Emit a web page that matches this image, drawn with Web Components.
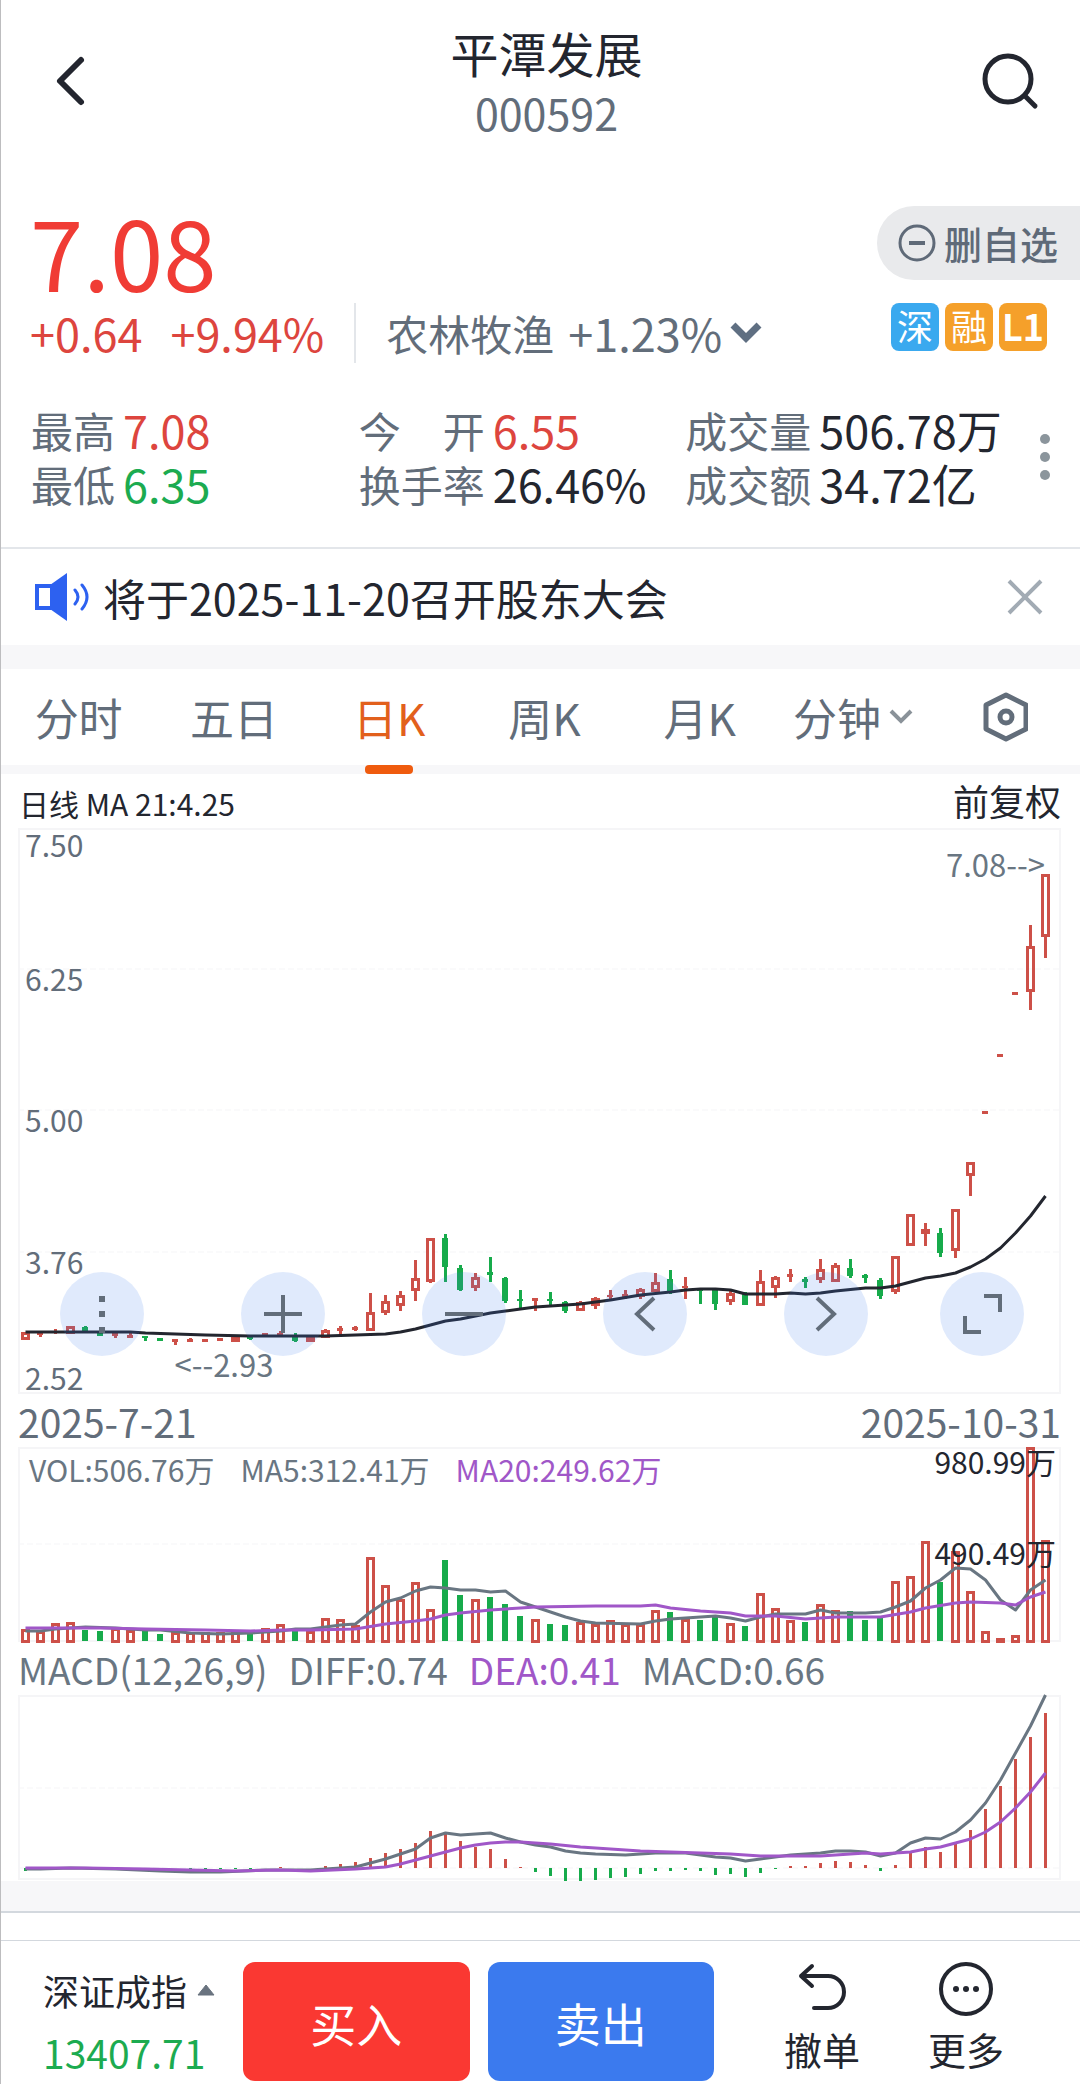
<!DOCTYPE html>
<html lang="zh-CN">
<head>
<meta charset="utf-8">
<meta name="viewport" content="width=device-width, initial-scale=1">
<title>平潭发展 000592</title>
<style>
  :root {
    --ink: #23262f;
    --muted: #626d7a;
    --line-grey: #697682;
    --up: #dd453e;
    --down: #1cab50;
    --purple: #a057c8;
    --band: #f7f7f9;
    --frame: #f5f5f7;
  }
  * { box-sizing: border-box; }
  body {
    margin: 0;
    background: #fff;
    color: var(--ink);
    font-family: "Noto Sans CJK SC", "Noto Sans", sans-serif;
  }
</style>
</head>
<body>
<stock-page>
  <quote-header name="平潭发展" code="000592"></quote-header>

  <quote-summary price="7.08" change="+0.64" percent="+9.94%" sector="农林牧渔" sector-change="+1.23%">
    <market-tag slot="tags" color="#3aa9ef">深</market-tag>
    <market-tag slot="tags" color="#f5a02a">融</market-tag>
    <market-tag slot="tags" color="#f5a02a" strong>L1</market-tag>
    <stat-item slot="stats" tone="up"><span slot="label">最高</span>7.08</stat-item>
    <stat-item slot="stats" tone="up" wide><span slot="label">今</span><span slot="label">开</span>6.55</stat-item>
    <stat-item slot="stats"><span slot="label">成交量</span>506.78万</stat-item>
    <stat-item slot="stats" tone="down"><span slot="label">最低</span>6.35</stat-item>
    <stat-item slot="stats"><span slot="label">换手率</span>26.46%</stat-item>
    <stat-item slot="stats"><span slot="label">成交额</span>34.72亿</stat-item>
  </quote-summary>

  <notice-bar>将于2025-11-20召开股东大会</notice-bar>

  <period-tabs></period-tabs>

  <kline-chart></kline-chart>
  <volume-chart></volume-chart>
  <macd-chart></macd-chart>

  <trade-bar slot="footer" index-name="深证成指" index-value="13407.71"></trade-bar>
</stock-page>

<script>
// ── Series ────────────────────────────────────────────────────────────────
// One row per day: direction, high, body top, body bottom, low (pane units, y down)
const CANDLES = `
r 504 504 512 512|r 504 504 507 509|r 501 503 505 506|r 498 498 506 506|g 498 499 503 504
g 504 505 508 508|r 504 505 508 510|r 505 507 510 510|g 508 508 510 513|g 510 510 513 513
r 511 511 514 517|r 510 511 514 514|r 511 511 514 514|r 510 510 513 513|r 508 508 514 514
g 507 508 511 512|r 505 505 508 508|r 503 505 508 508|g 505 508 513 514|r 509 509 514 514
r 501 502 510 510|r 498 500 503 506|r 498 499 502 503|r 465 484 503 503|r 467 473 485 487
r 463 467 478 483|r 432 450 463 473|r 410 410 454 455|g 406 410 439 454|g 437 440 462 463
r 445 449 460 463|g 429 444 447 454|g 449 450 473 475|g 462 471 473 480|r 470 470 473 483
g 464 471 473 478|g 473 474 483 485|r 473 474 483 483|r 469 470 478 481|r 462 467 469 472
r 462 466 469 471|r 460 461 469 471|r 445 454 464 464|g 442 451 464 466|r 449 458 460 471
g 460 461 463 476|g 461 462 476 482|r 463 465 474 477|g 464 465 477 477|r 442 453 478 478
r 448 449 460 470|r 441 446 449 454|g 449 451 454 460|r 431 441 452 455|r 435 437 454 454
g 431 440 448 450|g 446 447 450 455|g 450 452 468 471|r 428 428 464 466|r 386 386 418 418
r 395 401 406 418|g 400 405 425 429|r 381 381 423 430|r 334 334 348 368|r 283 283 286 286
r 226 226 229 229|r 164 164 167 167|r 97 118 164 182|r 46 46 109 130`
  .trim().split(/[|\n]/)
  .map((row) => {
    const [dir, ...v] = row.split(' ');
    const [high, top, bottom, low] = v.map(Number);
    return { dir, high, top, bottom, low };
  });

const VOLUMES = [
  182, 184, 176, 175, 183, 184, 181, 183, 183, 187, 185, 185, 185, 185, 183, 185, 181, 177, 184, 184,
  171, 172, 178, 110, 138, 152, 135, 162, 113, 148, 152, 150, 157, 169, 172, 177, 178, 175, 177, 173,
  177, 177, 163, 165, 172, 173, 170, 176, 179, 146, 161, 173, 175, 157, 163, 164, 173, 171, 134, 129,
  94, 135, 104, 144, 184, 191, 188, 0, 93,
];

const MACD_BARS = [
  176, 174, 173, 173, 173, 173, 173, 173, 173, 173, 173, 174, 174, 174, 174, 174, 173, 172, 173, 173,
  171, 169, 167, 163, 158, 154, 148, 136, 138, 146, 152, 154, 164, 172, 177, 181, 186, 186, 185, 183,
  182, 179, 176, 176, 175, 176, 180, 179, 182, 178, 174, 171, 171, 168, 166, 167, 170, 176, 170, 157,
  152, 157, 149, 135, 114, 91, 64, 42, 18,
];

// Lines as "day:y" knots
const MA21 = '0:504 7:504 8:505 10:506 12:507 15:508 20:508 22:507 24:506 25:504 26:501 27:497 28:493 29:491 30:488 31:485 32:483 33:481 34:479 35:478 37:476 39:472 41:467 43:464 44:462 45:461 46:461 47:462 48:466 49:466 50:466 51:465 52:466 53:465 54:463 56:460 57:460 58:458 59:454 60:450 61:448 62:445 63:439 64:431 65:420 66:405 67:388 68:368';
const VOL_MA5 = '0:184 1:184 2:182 3:181 4:180 6:181 8:183 9:183 11:186 13:187 15:186 17:184 18:182 19:182 20:180 21:178 22:177 23:165 24:155 25:151 26:144 27:140 28:141 29:143 30:143 31:145 32:144 33:155 34:160 35:165 36:170 37:174 38:176 41:177 42:174 43:172 44:171 46:169 47:171 48:174 49:170 50:167 52:167 53:163 54:166 56:166 57:165 58:160 59:154 60:141 61:133 62:121 63:122 64:133 65:153 66:163 67:143 68:133';
const VOL_MA20 = '0:181 3:181 5:181 8:182 12:183 15:184 17:183 19:183 22:182 24:177 26:174 27:172 28:168 29:166 31:163 33:161 34:160 38:159 41:159 42:158 43:161 45:164 47:166 48:169 50:169 52:172 54:170 57:170 59:165 60:161 62:156 63:155 65:156 66:158 67:150 68:145';
const DIFF = '0:174 1:174 3:173 6:174 9:176 11:177 13:177 16:175 19:175 20:174 22:172 23:168 24:164 25:159 26:154 27:143 28:138 29:140 30:139 31:138 32:143 33:147 34:150 35:152 36:156 37:158 38:159 40:160 42:158 44:158 45:160 46:162 47:163 48:166 49:164 51:160 53:158 54:156 55:156 56:157 57:161 58:158 59:148 60:143 61:144 62:137 63:125 64:108 65:85 66:58 67:31 68:0';
const DEA = '0:173 4:173 8:174 11:175 14:176 17:175 19:176 22:174 24:172 25:169 26:165 27:161 28:157 29:153 30:150 31:148 32:147 33:147 34:148 35:149 37:152 39:154 41:156 43:157 45:158 47:159 49:161 51:161 53:161 55:159 56:158 57:159 58:158 59:157 60:154 61:152 62:148 63:144 64:137 65:127 66:113 67:97 68:78';

// ── Drawing helpers ───────────────────────────────────────────────────────
const PANE_WIDTH = 1043;
const STEP = 15;
const slotX = (i) => 3 + i * STEP;

const rect = (x, y, w, h, cls) => `<rect x="${x}" y="${y}" width="${w}" height="${h}" class="${cls}"/>`;

const hollow = (x, top, bottom) =>
  `<path class="up" fill-rule="evenodd" d="M${x} ${top}h9v${bottom - top}h-9zM${x + 3} ${top + 3}v${bottom - top - 6}h3v${-(bottom - top - 6)}z"/>`;

const line = (knots, cls) => {
  const pts = knots.split(' ').map((k) => {
    const [i, y] = k.split(':');
    return `${slotX(+i) + 4.5},${y}`;
  });
  return `<polyline class="${cls}" points="${pts.join(' ')}"/>`;
};

const grid = (ys) => ys.map((y) => `<path class="grid" d="M0 ${y}H${PANE_WIDTH}"/>`).join('');

const svg = (height, body) =>
  `<svg viewBox="0 0 ${PANE_WIDTH} ${height}" height="${height}" preserveAspectRatio="none" aria-hidden="true">${body}</svg>`;

const drawCandle = (c, i) => {
  const x = slotX(i);
  const cls = c.dir === 'r' ? 'up' : 'down';
  let out = '';
  if (c.top > c.high) out += rect(x + 3, c.high, 3, c.top - c.high, cls);
  if (c.low > c.bottom) out += rect(x + 3, c.bottom, 3, c.low - c.bottom, cls);
  const h = c.bottom - c.top;
  if (c.dir === 'r' && h > 6) return out + hollow(x, c.top, c.bottom);
  return out + (c.dir === 'r' && h > 4
    ? rect(x, c.top, 9, h, cls)
    : rect(x + 1, c.top, 6, h, cls));
};

const drawVolume = (top, i) => {
  if (CANDLES[i].dir === 'g') return rect(slotX(i) + 1, top, 6, 194 - top, 'down');
  return 196 - top > 6 ? hollow(slotX(i), top, 196) : rect(slotX(i), top, 9, 196 - top, 'up');
};

const drawMacd = (y, i) => {
  const x = slotX(i) + 3;
  if (y < 173) return rect(x, y, 3, 173 - y, 'up');
  return y > 173 ? rect(x, 173, 3, y - 173, 'down') : '';
};

// ── Base element ──────────────────────────────────────────────────────────
const RESET = `
  *, *::before, *::after { box-sizing: border-box; }
  button { margin: 0; padding: 0; border: 0; background: none; color: inherit; font: inherit; cursor: pointer; }
  svg { display: block; }
`;

class BaseElement extends HTMLElement {
  constructor() {
    super();
    this.attachShadow({ mode: 'open' });
  }

  connectedCallback() {
    this.shadowRoot.innerHTML = `<style>${RESET}${this.styles()}</style>${this.render()}`;
  }

  attr(name) {
    return this.getAttribute(name) ?? '';
  }

  styles() { return ''; }
  render() { return '<slot></slot>'; }
}

class StockPage extends BaseElement {
  styles() {
    return `
      :host {
        display: flex;
        flex-direction: column;
        min-height: 100vh;
        border-left: 1px solid #bdbdbf;
      }
      main { display: block; }
      .band { height: 30px; background: var(--band); }
      .rest {
        flex: 1;
        min-height: 27px;
        border-top: 2px solid #d3d8de;
      }
    `;
  }
  render() {
    return `
      <main><slot></slot></main>
      <div class="band"></div>
      <div class="rest"></div>
      <slot name="footer"></slot>
    `;
  }
}

class QuoteHeader extends BaseElement {
  styles() {
    return `
      :host {
        display: grid;
        grid-template-columns: 160px 1fr 148px;
        align-items: center;
        padding: 22px 0 8px;
      }
      .titles { text-align: center; line-height: 60px; }
      h1 { margin: 0; font-size: 48px; font-weight: 400; line-height: inherit; }
      p { margin: 0; font-size: 43px; color: var(--muted); }
      button:first-of-type { justify-self: start; padding-left: 50px; }
      button:last-of-type { justify-self: end; padding-right: 38px; }
    `;
  }
  render() {
    return `
      <button type="button" aria-label="返回">
        <svg width="40" height="56" viewBox="0 0 40 56" fill="none" stroke="#23262f" stroke-width="6" stroke-linecap="round" stroke-linejoin="round"><path d="M30 6 9 27l21 21"/></svg>
      </button>
      <div class="titles"><h1>${this.attr('name')}</h1><p>${this.attr('code')}</p></div>
      <button type="button" aria-label="搜索">
        <svg width="64" height="64" viewBox="0 0 64 64" fill="none" stroke="#23262f" stroke-width="5" stroke-linecap="round"><circle cx="30" cy="29" r="23"/><path d="m47 46 10 10"/></svg>
      </button>
    `;
  }
}

class MarketTag extends BaseElement {
  styles() {
    return `
      :host {
        display: block;
        width: 48px;
        height: 48px;
        border-radius: 8px;
        background: ${this.attr('color')};
        color: #fff;
        font-size: 36px;
        font-weight: ${this.hasAttribute('strong') ? 700 : 400};
        line-height: 44px;
        text-align: center;
      }
    `;
  }
}

class StatItem extends BaseElement {
  styles() {
    const tone = this.attr('tone');
    return `
      :host { display: flex; gap: 8px; line-height: 54px; font-size: 45px; white-space: nowrap; }
      .label {
        display: flex;
        justify-content: space-between;
        font-size: 42px;
        color: var(--muted);
        ${this.hasAttribute('wide') ? 'width: 3em;' : ''}
      }
      .value { color: ${tone ? `var(--${tone})` : 'inherit'}; }
    `;
  }
  render() {
    return '<span class="label"><slot name="label"></slot></span><span class="value"><slot></slot></span>';
  }
}

class QuoteSummary extends BaseElement {
  styles() {
    return `
      :host { display: block; padding: 53px 0 36px; border-bottom: 2px solid #e3e6ea; }
      .top { display: flex; justify-content: space-between; }
      .left { padding-left: 29px; }
      .price { font-size: 96px; line-height: 96px; color: #f03c35; }
      .row { display: flex; align-items: center; margin-top: 4px; line-height: 60px; font-size: 45px; color: var(--up); }
      .row > span + span { margin-left: 28px; }
      .sector {
        display: flex;
        align-items: center;
        gap: 14px;
        height: 60px;
        margin-left: 30px;
        padding-left: 30px;
        border-left: 2px solid #e3e6ea;
        color: var(--muted);
        font-size: 42px;
      }
      .sector .change { font-size: 45px; }
      .sector svg { margin-left: -6px; }
      .right { display: flex; flex-direction: column; align-items: flex-end; gap: 23px; padding-top: 3px; }
      .remove {
        display: flex;
        align-items: center;
        gap: 7px;
        height: 74px;
        padding: 0 22px 0 20px;
        border-radius: 37px 0 0 37px;
        background: #e9eaec;
        color: #5f6a78;
        font-size: 38px;
        font-weight: 500;
        line-height: 70px;
      }
      .tags { display: flex; gap: 6px; padding-right: 33px; }
      .bottom { display: flex; margin-top: 40px; }
      .stats { flex: 1; display: grid; grid-template-columns: 328fr 327fr 325fr; padding-left: 30px; }
      .more { width: 70px; display: flex; justify-content: center; align-items: center; }
    `;
  }
  render() {
    return `
      <div class="top">
        <div class="left">
          <div class="price">${this.attr('price')}</div>
          <div class="row">
            <span>${this.attr('change')}</span><span>${this.attr('percent')}</span>
            <button class="sector" type="button">
              <span>${this.attr('sector')}</span><span class="change">${this.attr('sector-change')}</span>
              <svg width="32" height="24" viewBox="0 0 32 24" fill="none" stroke="#5f6f82" stroke-width="7"><path d="m3 4 13 13L29 4"/></svg>
            </button>
          </div>
        </div>
        <div class="right">
          <button class="remove" type="button">
            <svg width="40" height="40" viewBox="0 0 40 40" fill="none" stroke="#5f6a78" stroke-width="3"><circle cx="20" cy="20" r="17"/><path d="M12 20h16" stroke-width="4"/></svg>
            删自选
          </button>
          <div class="tags"><slot name="tags"></slot></div>
        </div>
      </div>
      <div class="bottom">
        <div class="stats"><slot name="stats"></slot></div>
        <button class="more" type="button" aria-label="更多指标">
          <svg width="10" height="46" viewBox="0 0 10 46" fill="#8b959c"><circle cx="5" cy="5" r="5"/><circle cx="5" cy="23" r="5"/><circle cx="5" cy="41" r="5"/></svg>
        </button>
      </div>
    `;
  }
}

class NoticeBar extends BaseElement {
  styles() {
    return `
      :host {
        display: flex;
        align-items: center;
        gap: 12px;
        padding: 20px 37px 20px 32px;
        border-bottom: 24px solid var(--band);
        font-size: 43px;
        line-height: 56px;
      }
      .text { flex: 1; }
    `;
  }
  render() {
    return `
      <svg width="58" height="50" viewBox="0 0 58 50" fill="none" stroke="#2d61f0" stroke-width="4" stroke-linecap="round">
        <path d="M18 14H4v22h14"/>
        <path d="M17 13 34 1v48L17 37z" fill="#2d61f0" stroke="none"/>
        <path d="M42 18q6 7 0 14M49 13q10 12 0 24" stroke-width="3"/>
      </svg>
      <span class="text"><slot></slot></span>
      <button type="button" aria-label="关闭">
        <svg width="36" height="36" viewBox="0 0 36 36" fill="none" stroke="#a2abb4" stroke-width="4"><path d="m2 2 32 32M34 2 2 34"/></svg>
      </button>
    `;
  }
}

class PeriodTabs extends BaseElement {
  styles() {
    return `
      :host {
        display: grid;
        grid-template-columns: repeat(5, 156fr) 152fr 152fr;
        border-bottom: 9px solid #f7f7f9;
        color: var(--muted);
        font-size: 44px;
      }
      button {
        position: relative;
        display: flex;
        justify-content: center;
        align-items: center;
        gap: 8px;
        height: 96px;
        line-height: 60px;
      }
      .active { color: #e2601c; }
      .active::after {
        content: "";
        position: absolute;
        left: calc(50% - 24px);
        bottom: -9px;
        width: 48px;
        height: 9px;
        border-radius: 4px;
        background: #ef5b0e;
      }
    `;
  }
  connectedCallback() {
    super.connectedCallback();
    const tabs = [...this.shadowRoot.querySelectorAll('[role="tab"]')];
    tabs.forEach((tab) => {
      tab.addEventListener('click', () => {
        tabs.forEach((t) => {
          t.classList.toggle('active', t === tab);
          t.setAttribute('aria-selected', t === tab);
        });
      });
    });
  }
  render() {
    const tab = (text) => {
      const on = text === '日K';
      return `<button type="button" role="tab" aria-selected="${on}" class="${on ? 'active' : ''}">${text}</button>`;
    };
    return `
      ${['分时', '五日', '日K', '周K', '月K'].map(tab).join('')}
      <button type="button" aria-haspopup="menu">分钟
        <svg width="24" height="18" viewBox="0 0 24 18" fill="none" stroke="#8a9299" stroke-width="4"><path d="m2 3 10 10L22 3"/></svg>
      </button>
      <button type="button" aria-label="图表设置">
        <svg width="48" height="52" viewBox="0 0 48 52" fill="none" stroke="#626d7a" stroke-width="5" stroke-linejoin="round"><path d="M26 4 46 14v24L26 48 6 38V14z"/><circle cx="26" cy="26" r="6"/></svg>
      </button>
    `;
  }
}

// ── Chart panes ───────────────────────────────────────────────────────────
const PANE_STYLES = `
  :host { display: block; padding: 0 19px 0 17px; }
  .pane { position: relative; }
  .pane > svg { width: 100%; overflow: visible; }
  .box { fill: none; stroke: var(--frame); stroke-width: 2; }
  .grid { stroke: #f5f5f7; stroke-width: 1; stroke-dasharray: 6 3; }
  .up { fill: #cd5048; }
  .down { fill: #17ab4b; }
  polyline { fill: none; stroke-width: 3; stroke-linejoin: round; }
  .ink { stroke: #23262f; }
  .grey { stroke: #697682; }
  .purple { stroke: var(--purple); }
  .caption { display: flex; align-items: center; height: 53px; color: var(--line-grey); white-space: pre; }
`;

class KlineChart extends BaseElement {
  styles() {
    return `${PANE_STYLES}
      .head { display: flex; justify-content: space-between; align-items: baseline; height: 54px; padding-left: 1px; font-size: 30px; line-height: 52px; }
      .head button { font-size: 36px; }
      .scale { position: absolute; left: 7px; font-size: 30px; line-height: 30px; color: var(--muted); }
      .mark { position: absolute; font-size: 31px; line-height: 30px; color: var(--line-grey); }
      .high { top: 21px; right: 16px; }
      .low { top: 521px; left: 15%; }
      .tools {
        position: absolute;
        left: 42px;
        right: 37px;
        top: 444px;
        display: grid;
        grid-template-columns: repeat(4, 181fr) 156fr 84fr;
      }
      .tools button { width: 84px; height: 84px; border-radius: 50%; background: rgba(60, 125, 235, .16); }
      .tools svg { width: 84px; height: 84px; fill: none; stroke: #626d7a; stroke-width: 4; }
      .dates { justify-content: space-between; font-size: 39px; color: var(--muted); }
    `;
  }
  render() {
    const scale = [['7.50', 1], ['6.25', 135], ['5.00', 276], ['3.76', 418], ['2.52', 534]];
    const tools = [
      ['更多', '<path d="M42 24v6M42 39v6M42 55v6" stroke-width="6"/>'],
      ['放大', '<path d="M42 23v38M23 42h38"/>'],
      ['缩小', '<path d="M23 42h38"/>'],
      ['左移', '<path d="M51 26 34 42l17 16"/>'],
      ['右移', '<path d="m33 26 17 16-17 16"/>'],
      ['全屏', '<path d="M44 24h16v16M25 44v16h16"/>'],
    ];
    return `
      <div class="head"><span>日线 MA 21:4.25</span><button type="button">前复权</button></div>
      <div class="pane">
        ${svg(566, `
          <rect class="box" x="1" y="1" width="1041" height="564"/>
          ${grid([141, 282, 424])}
          ${CANDLES.map(drawCandle).join('')}
          ${line(MA21, 'ink')}
        `)}
        ${scale.map(([t, y]) => `<span class="scale" style="top:${y}px">${t}</span>`).join('')}
        <span class="mark high">7.08--&gt;</span>
        <span class="mark low">&lt;--2.93</span>
        <div class="tools">
          ${tools.map(([name, d]) => `<button type="button" aria-label="${name}"><svg viewBox="0 0 84 84">${d}</svg></button>`).join('')}
        </div>
      </div>
      <div class="caption dates"><span>2025-7-21</span><span>2025-10-31</span></div>
    `;
  }
}

class VolumeChart extends BaseElement {
  styles() {
    return `${PANE_STYLES}
      .legend, .scale { position: absolute; font-size: 30px; line-height: 36px; }
      .legend { top: 4px; left: 11px; display: flex; gap: 26px; color: var(--line-grey); }
      .legend .ma20 { color: var(--purple); }
      .scale { right: 5px; }
      .max { top: -4px; }
      .mid { top: 87px; }
    `;
  }
  render() {
    return `
      <div class="pane">
        ${svg(195, `
          <rect class="box" x="1" y="1" width="1041" height="193"/>
          ${grid([97])}
          ${VOLUMES.map(drawVolume).join('')}
          ${line(VOL_MA5, 'grey')}
          ${line(VOL_MA20, 'purple')}
        `)}
        <div class="legend"><span>VOL:506.76万</span><span>MA5:312.41万</span><span class="ma20">MA20:249.62万</span></div>
        <span class="scale max">980.99万</span>
        <span class="scale mid">490.49万</span>
      </div>
    `;
  }
}

class MacdChart extends BaseElement {
  styles() {
    return `${PANE_STYLES}
      .caption { gap: 21px; font-size: 37px; }
      .dea { color: var(--purple); }
    `;
  }
  render() {
    return `
      <div class="caption"><span>MACD(12,26,9)</span><span>DIFF:0.74</span><span class="dea">DEA:0.41</span><span>MACD:0.66</span></div>
      <div class="pane">
        ${svg(186, `
          <rect class="box" x="1" y="1" width="1041" height="183"/>
          ${grid([93, 173])}
          ${MACD_BARS.map(drawMacd).join('')}
          ${line(DIFF, 'grey')}
          ${line(DEA, 'purple')}
        `)}
      </div>
    `;
  }
}

class TradeBar extends BaseElement {
  styles() {
    return `
      :host {
        display: flex;
        height: 144px;
        padding: 21px 42px 3px 0;
        border-top: 1px solid #d3d8de;
      }
      .index { width: 242px; padding-left: 42px; text-align: left; white-space: nowrap; }
      .name { display: flex; align-items: center; gap: 9px; font-size: 36px; line-height: 56px; }
      .value { display: block; font-size: 39px; line-height: 68px; color: var(--down); }
      .orders { flex: 1; display: flex; gap: 18px; margin-right: 36px; }
      .orders button { flex: 1; border-radius: 12px; color: #fff; font-size: 46px; line-height: 60px; }
      .buy { background: #fa3832; }
      .sell { background: #3b7aee; }
      .action { display: flex; flex-direction: column; align-items: center; width: 144px; font-size: 38px; line-height: 60px; }
      .action svg { margin-bottom: 3px; }
    `;
  }
  render() {
    return `
      <button class="index" type="button">
        <span class="name">${this.attr('index-name')}<svg width="20" height="12" viewBox="0 0 20 12"><path d="m10 1 8 10H2z" fill="#69737f" stroke="#69737f" stroke-linejoin="round"/></svg></span>
        <span class="value">${this.attr('index-value')}</span>
      </button>
      <div class="orders">
        <button class="buy" type="button">买入</button>
        <button class="sell" type="button">卖出</button>
      </div>
      <button class="action" type="button">
        <svg width="54" height="54" viewBox="0 0 54 54" fill="none" stroke="#23262f" stroke-width="4" stroke-linecap="round" stroke-linejoin="round"><path d="M17 4 6 14l11 10M6 14h27a16 16 0 0 1 0 32H19"/></svg>
        撤单
      </button>
      <button class="action" type="button">
        <svg width="54" height="54" viewBox="0 0 54 54" fill="none" stroke="#23262f" stroke-width="4"><circle cx="27" cy="27" r="25"/><g fill="#23262f" stroke="none"><circle cx="17" cy="27" r="3"/><circle cx="27" cy="27" r="3"/><circle cx="37" cy="27" r="3"/></g></svg>
        更多
      </button>
    `;
  }
}

customElements.define('stock-page', StockPage);
customElements.define('quote-header', QuoteHeader);
customElements.define('market-tag', MarketTag);
customElements.define('stat-item', StatItem);
customElements.define('quote-summary', QuoteSummary);
customElements.define('notice-bar', NoticeBar);
customElements.define('period-tabs', PeriodTabs);
customElements.define('kline-chart', KlineChart);
customElements.define('volume-chart', VolumeChart);
customElements.define('macd-chart', MacdChart);
customElements.define('trade-bar', TradeBar);
</script>
</body>
</html>
